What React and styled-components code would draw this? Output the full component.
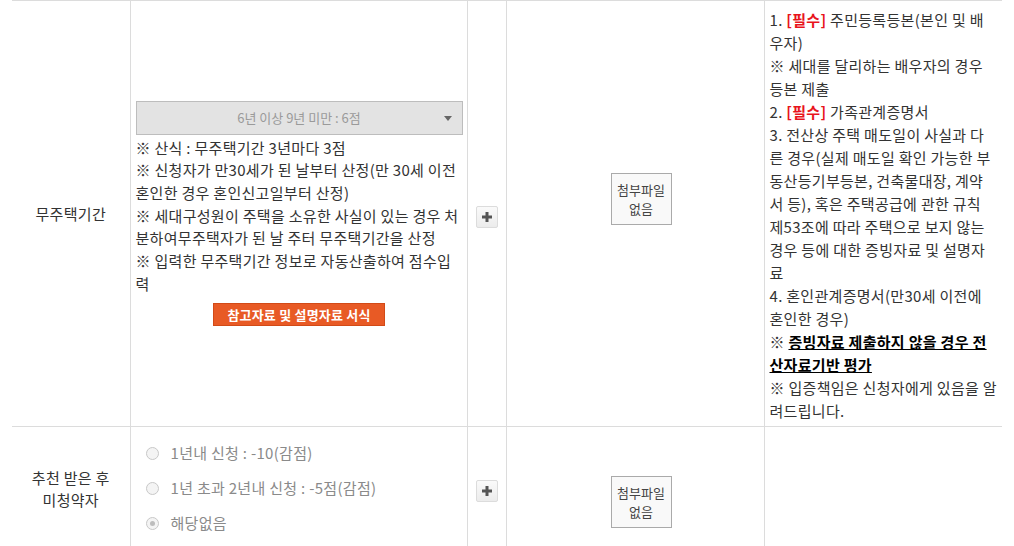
import React from "react";
import styled, { createGlobalStyle } from "styled-components";

const GlobalStyle = createGlobalStyle`
  html, body {
    margin: 0;
    padding: 0;
    background: #fff;
  }
  body {
    font-family: "Noto Sans CJK KR", "Noto Sans", sans-serif;
    color: #333;
  }
`;

const Page = styled("div")`
  padding: 0 12px;
  overflow: hidden;
  height: 546px;
`;

const Table = styled("table")`
  width: 990px;
  border-collapse: collapse;
  table-layout: fixed;
  font-size: 15px;
  letter-spacing: 0.3px;
`;

const Row = styled("tr")`
  border-top: 1px solid #dcdcdc;
  height: ${(p) => p.height}px;
`;

const Cell = styled("td")`
  border-left: ${(p) => (p.first ? "none" : "1px solid #dcdcdc")};
  vertical-align: middle;
  text-align: ${(p) => p.align || "left"};
  padding: ${(p) => p.pad || "6px"};
  line-height: ${(p) => p.lh || 22.7}px;
`;

const Label = styled("div")`
  text-align: center;
  line-height: 22px;
  color: #333;
`;

const FakeSelect = styled("div")`
  position: relative;
  height: 32px;
  line-height: 32px;
  border: 1px solid #bdbdbd;
  background: #e3e3e3;
  color: #9a9a9a;
  font-size: 13px;
  letter-spacing: 0;
  text-align: center;
  margin-bottom: 2px;

  &::after {
    content: "";
    position: absolute;
    right: 10px;
    top: 14px;
    border-left: 4px solid transparent;
    border-right: 4px solid transparent;
    border-top: 5px solid #666;
  }
`;

const Line = styled("div")`
  white-space: nowrap;
  color: #333;
`;

const OrangeButton = styled("div")`
  display: block;
  width: fit-content;
  margin: 8px auto 0;
  padding: 0 13px;
  height: 21px;
  line-height: 21px;
  background: #e85a25;
  border: 1px solid #d24a17;
  color: #fff;
  font-size: 13px;
  letter-spacing: 0.2px;
  font-weight: bold;
`;

const PlusButton = styled("div")`
  width: 20px;
  height: 20px;
  margin: ${(p) => p.margin || "0 auto"};
  border: 1px solid #dcdcdc;
  border-radius: 2px;
  background: linear-gradient(#fafafa, #ececec);
  display: flex;
  align-items: center;
  justify-content: center;
`;

const AttachBox = styled("div")`
  width: 59px;
  margin: ${(p) => p.margin};
  padding: 6px 0;
  border: 1px solid #aaa;
  background: #f9f9f9;
  font-size: 13px;
  letter-spacing: 0;
  line-height: 19px;
  color: #444;
  text-align: center;
`;

const Req = styled("b")`
  color: #e8141c;
`;

const Warn = styled("b")`
  color: #000;
  text-decoration: underline;
`;

const RadioList = styled("div")`
  display: flex;
  flex-direction: column;
  gap: 12px;
  padding-left: 9px;
`;

const RadioItem = styled("label")`
  display: flex;
  align-items: center;
  gap: 12px;
  height: 23px;
  color: #8a8a8a;
  font-size: 15px;
`;

const RadioDot = styled("span")`
  width: 11px;
  height: 11px;
  border-radius: 50%;
  border: 1px solid #c8c8c8;
  background: #f4f4f4;
  position: relative;

  &::after {
    content: "";
    display: ${(p) => (p.checked ? "block" : "none")};
    position: absolute;
    left: 3px;
    top: 3px;
    width: 5px;
    height: 5px;
    border-radius: 50%;
    background: #bdbdbd;
  }
`;

const PlusIcon = () => (
  <svg width="10" height="10" viewBox="0 0 10 10">
    <path d="M3.5 0h3v3.5H10v3H6.5V10h-3V6.5H0v-3h3.5z" fill="#555" />
  </svg>
);

const Plus = ({ margin }) => (
  <PlusButton margin={margin}>
    <PlusIcon />
  </PlusButton>
);

const Attach = ({ margin }) => (
  <AttachBox margin={margin}>
    첨부파일
    <br />
    없음
  </AttachBox>
);

const notes = [
  "※ 산식 : 무주택기간 3년마다 3점",
  "※ 신청자가 만30세가 된 날부터 산정(만 30세 이전",
  "혼인한 경우 혼인신고일부터 산정)",
  "※ 세대구성원이 주택을 소유한 사실이 있는 경우 처",
  "분하여무주택자가 된 날 주터 무주택기간을 산정",
  "※ 입력한 무주택기간 정보로 자동산출하여 점수입",
  "력",
];

const radios = [
  { text: "1년내 신청 : -10(감점)", checked: false },
  { text: "1년 초과 2년내 신청 : -5점(감점)", checked: false },
  { text: "해당없음", checked: true },
];

export default function App() {
  return (
    <Page>
      <GlobalStyle />
      <Table>
        <colgroup>
          <col style={{ width: 118 }} />
          <col style={{ width: 337 }} />
          <col style={{ width: 39 }} />
          <col style={{ width: 258 }} />
          <col style={{ width: 238 }} />
        </colgroup>
        <tbody>
          <Row height={426}>
            <Cell first align="center">
              <Label>무주택기간</Label>
            </Cell>
            <Cell pad="6px 4px 6px 5px">
              <FakeSelect>6년 이상 9년 미만 : 6점</FakeSelect>
              {notes.map((n) => (
                <Line key={n}>{n}</Line>
              ))}
              <OrangeButton>참고자료 및 설명자료 서식</OrangeButton>
            </Cell>
            <Cell align="center" pad="0">
              <Plus margin="6px auto 0" />
            </Cell>
            <Cell align="center" pad="6px 0 6px 12px">
              <Attach margin="0 auto 30px" />
            </Cell>
            <Cell pad="6px 4px 4px 5px" lh={23}>
              <Line>
                1. <Req>[필수]</Req> 주민등록등본(본인 및 배
              </Line>
              <Line>우자)</Line>
              <Line>※ 세대를 달리하는 배우자의 경우</Line>
              <Line>등본 제출</Line>
              <Line>
                2. <Req>[필수]</Req> 가족관계증명서
              </Line>
              <Line>3. 전산상 주택 매도일이 사실과 다</Line>
              <Line>른 경우(실제 매도일 확인 가능한 부</Line>
              <Line>동산등기부등본, 건축물대장, 계약</Line>
              <Line>서 등), 혹은 주택공급에 관한 규칙</Line>
              <Line>제53조에 따라 주택으로 보지 않는</Line>
              <Line>경우 등에 대한 증빙자료 및 설명자</Line>
              <Line>료</Line>
              <Line>4. 혼인관계증명서(만30세 이전에</Line>
              <Line>혼인한 경우)</Line>
              <Line>
                ※ <Warn>증빙자료 제출하지 않을 경우 전</Warn>
              </Line>
              <Line>
                <Warn>산자료기반 평가</Warn>
              </Line>
              <Line>※ 입증책임은 신청자에게 있음을 알</Line>
              <Line>려드립니다.</Line>
            </Cell>
          </Row>
          <Row height={124}>
            <Cell first align="center">
              <Label>
                추천 받은 후
                <br />
                미청약자
              </Label>
            </Cell>
            <Cell>
              <RadioList>
                {radios.map((r) => (
                  <RadioItem key={r.text}>
                    <RadioDot checked={r.checked} />
                    {r.text}
                  </RadioItem>
                ))}
              </RadioList>
            </Cell>
            <Cell align="center" pad="0">
              <Plus margin="4px auto 0" />
            </Cell>
            <Cell align="center" pad="6px 0 6px 12px">
              <Attach margin="26px auto 0" />
            </Cell>
            <Cell />
          </Row>
        </tbody>
      </Table>
    </Page>
  );
}
